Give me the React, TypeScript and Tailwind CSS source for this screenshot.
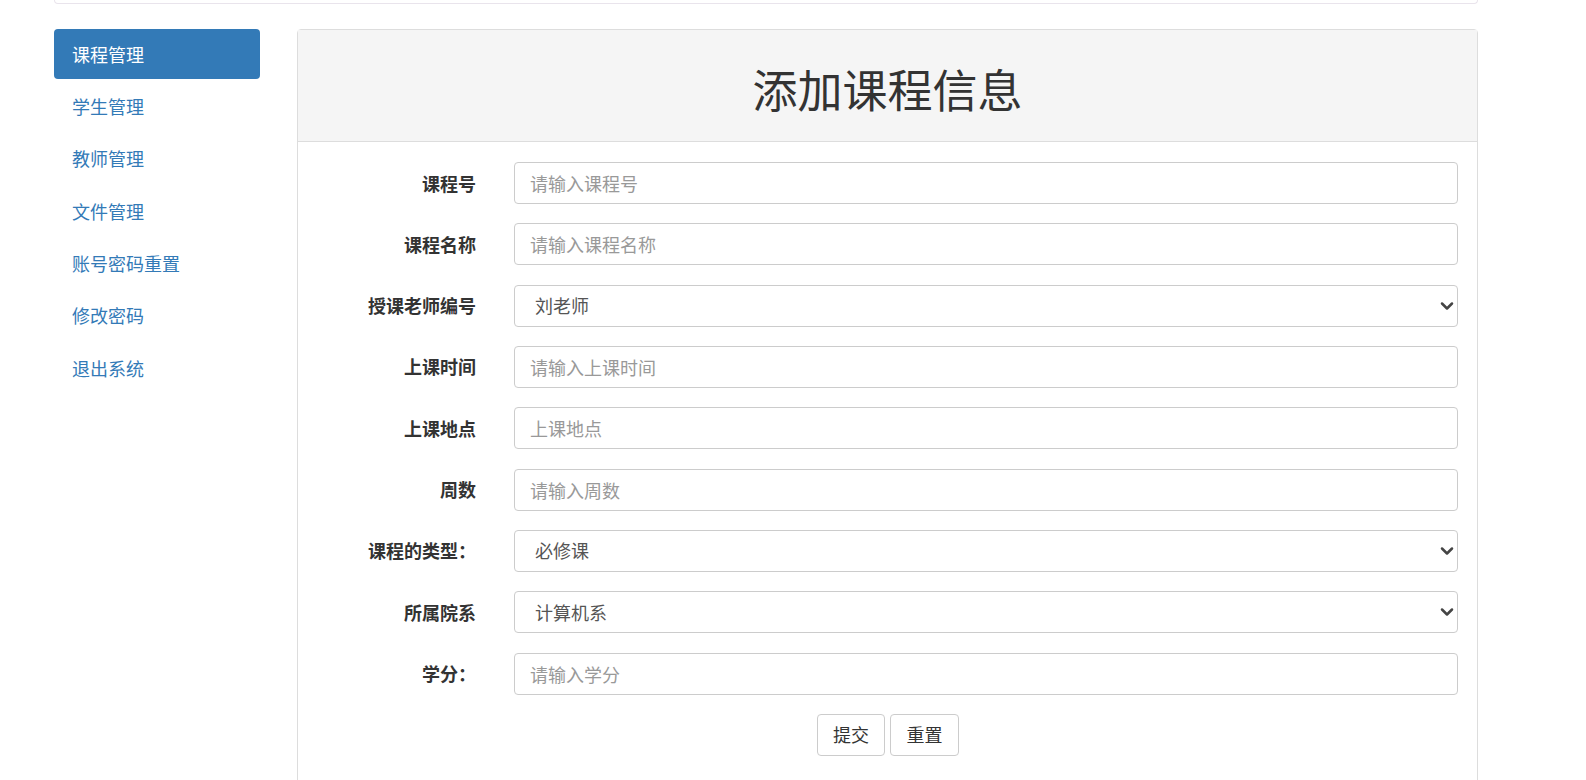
import { ChevronDown } from 'lucide-react';

const navItems = ['课程管理', '学生管理', '教师管理', '文件管理', '账号密码重置', '修改密码', '退出系统'];

type Field =
  | { label: string; kind: 'input'; placeholder: string }
  | { label: string; kind: 'select'; value: string };

const fields: Field[] = [
  { label: '课程号', kind: 'input', placeholder: '请输入课程号' },
  { label: '课程名称', kind: 'input', placeholder: '请输入课程名称' },
  { label: '授课老师编号', kind: 'select', value: '刘老师' },
  { label: '上课时间', kind: 'input', placeholder: '请输入上课时间' },
  { label: '上课地点', kind: 'input', placeholder: '上课地点' },
  { label: '周数', kind: 'input', placeholder: '请输入周数' },
  { label: '课程的类型：', kind: 'select', value: '必修课' },
  { label: '所属院系', kind: 'select', value: '计算机系' },
  { label: '学分：', kind: 'input', placeholder: '请输入学分' },
];

const font = { fontFamily: '"Noto Sans CJK SC", "Liberation Sans", sans-serif' };

function FormRow({ field }: { field: Field }) {
  return (
    <>
      <label className="flex h-[42px] items-center justify-end text-[18px] font-bold text-[#333]">
        {field.label}
      </label>
      {field.kind === 'input' ? (
        <input
          type="text"
          placeholder={field.placeholder}
          className="h-[42px] w-full rounded-[4px] border border-[#ccc] bg-white px-[15px] text-[18px] text-[#555] outline-none placeholder:text-[#999]"
        />
      ) : (
        <div className="relative h-[42px]">
          <select
            defaultValue={field.value}
            className="h-[42px] w-full appearance-none rounded-[4px] border border-[#ccc] bg-white pl-[20px] pr-10 text-[18px] text-[#555] outline-none"
          >
            <option>{field.value}</option>
          </select>
          <ChevronDown
            className="pointer-events-none absolute right-[1px] top-1/2 h-[20px] w-[20px] -translate-y-1/2 text-[#444]"
            strokeWidth={3}
          />
        </div>
      )}
    </>
  );
}

export default function App() {
  return (
    <div className="min-h-[780px] w-full overflow-hidden bg-white" style={font}>
      {/* top navbar, scrolled mostly out of view */}
      <div className="ml-[54px] h-[4px] w-[1424px] rounded-b-[4px] border-x border-b border-[#e9e4ec]" />

      <div className="ml-[54px] mt-[25px] flex items-start gap-[37px]">
        {/* sidebar */}
        <ul className="flex w-[206px] flex-col gap-[2.4px]">
          {navItems.map((item, i) => (
            <li
              key={item}
              className={`flex h-[50px] items-center rounded-[4px] px-[18px] text-[18px] ${
                i === 0 ? 'bg-[#337ab7] text-white' : 'text-[#337ab7]'
              }`}
            >
              {item}
            </li>
          ))}
        </ul>

        {/* panel */}
        <div className="w-[1181px] rounded-t-[4px] border border-[#ddd] bg-white">
          <div className="h-[112px] border-b border-[#ddd] bg-[#f5f5f5] pt-[35px] text-center">
            <h1 className="text-[45px] font-normal leading-[48px] text-[#333]">添加课程信息</h1>
          </div>
          <div className="pb-[40px] pr-[19px] pt-[20px]">
            <div className="grid grid-cols-[178px_1fr] gap-x-[38px] gap-y-[19.33px]">
              {fields.map((f) => (
                <FormRow key={f.label} field={f} />
              ))}
            </div>
            <div className="mt-[19px] flex justify-center gap-[5px] pl-[20px]">
              <button className="h-[42px] w-[68px] rounded-[4px] border border-[#ccc] bg-white text-[18px] text-[#333]">
                提交
              </button>
              <button className="h-[42px] w-[69px] rounded-[4px] border border-[#ccc] bg-white text-[18px] text-[#333]">
                重置
              </button>
            </div>
          </div>
        </div>
      </div>
    </div>
  );
}
